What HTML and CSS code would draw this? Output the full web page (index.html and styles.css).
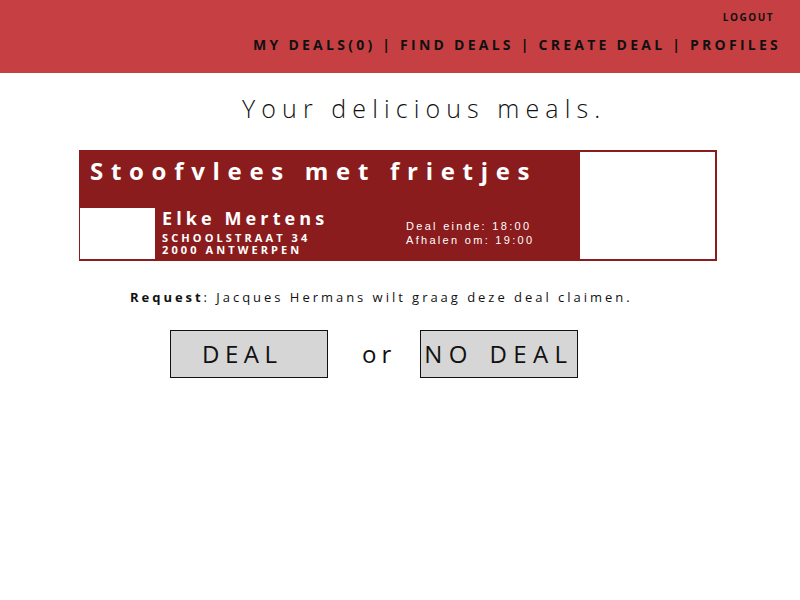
FILE: index.html
```html
<!DOCTYPE html>
<html>
<head>
<meta charset="utf-8">
<link rel="stylesheet" href="styles.css">
</head>
<body>
<header class="topbar">
  <div class="logout">LOGOUT</div>
  <nav class="nav">MY DEALS(0) | FIND DEALS | CREATE DEAL | PROFILES</nav>
</header>
<main class="content">
  <h1 class="title">Your delicious meals.</h1>
  <div class="card">
    <div class="card-main">
      <div class="card-title">Stoofvlees met frietjes</div>
      <div class="card-bottom">
        <div class="avatar"></div>
        <div class="person">
          <div class="name">Elke Mertens</div>
          <div class="addr first">SCHOOLSTRAAT 34</div>
          <div class="addr">2000 ANTWERPEN</div>
        </div>
        <div class="times">
          <div>Deal einde: 18:00</div>
          <div>Afhalen om: 19:00</div>
        </div>
      </div>
    </div>
    <div class="card-side"></div>
  </div>
  <p class="request"><b>Request</b>: Jacques Hermans wilt graag deze deal claimen.</p>
  <div class="actions">
    <button class="btn btn-deal">DEAL</button>
    <span class="or">or</span>
    <button class="btn btn-nodeal">NO DEAL</button>
  </div>
</main>
</body>
</html>
```
FILE: styles.css
```css
html, body { margin: 0; padding: 0; background: #fff; }
body { font-family: "Open Sans", "Noto Sans", sans-serif; color: #111; }

.topbar {
  background: #c64043;
  height: 73px;
  box-sizing: border-box;
  padding: 11px 20px 0 0;
  display: flex;
  flex-direction: column;
  align-items: flex-end;
  font-family: "Open Sans", "Liberation Sans", sans-serif;
  font-weight: 700;
  color: #111;
}
.logout {
  font-size: 10px;
  letter-spacing: 1.5px;
  line-height: 12px;
  margin-right: 6px;
}
.nav {
  margin-top: 14px;
  font-size: 14px;
  letter-spacing: 3.25px;
  line-height: 16px;
  margin-right: -1px;
}

.content { display: flex; flex-direction: column; align-items: flex-start; }

.title {
  margin: 16px 0 0 242px;
  font-weight: 300;
  font-size: 25px;
  letter-spacing: 6.1px;
  line-height: 38px;
  color: #111;
}

.card {
  margin: 23px 0 0 79px;
  width: 638px;
  height: 111px;
  box-sizing: border-box;
  border: 2px solid #8b1c1d;
  border-left-width: 1px;
  display: flex;
}
.card-main {
  width: 500px;
  background: #8b1c1d;
  color: #fff;
  display: flex;
  flex-direction: column;
  font-family: "Open Sans", "Liberation Sans", sans-serif;
  font-weight: 700;
}
.card-side { flex: 1; background: #fff; }
.card-title {
  font-size: 24px;
  letter-spacing: 7.7px;
  line-height: 36px;
  padding: 1px 0 0 10px;
  height: 56px;
  box-sizing: border-box;
  white-space: nowrap;
}
.card-bottom { display: flex; flex: 1; }
.avatar { width: 75px; height: 51px; background: #fff; margin-left: 0; }
.person { margin-left: 7px; width: 244px; }
.name {
  font-size: 18px;
  letter-spacing: 4.1px;
  line-height: 20px;
  margin-top: 0;
  white-space: nowrap;
}
.addr {
  font-size: 11px;
  letter-spacing: 3.1px;
  line-height: 12px;
  white-space: nowrap;
}
.addr.first { margin-top: 4px; }
.times {
  font-family: "Liberation Sans", Arial, sans-serif;
  font-weight: 400;
  font-size: 11px;
  letter-spacing: 2.3px;
  line-height: 14px;
  margin-top: 11px;
  white-space: nowrap;
}

.request {
  margin: 27px 0 0 130px;
  font-size: 13px;
  letter-spacing: 2.97px;
  line-height: 18px;
  white-space: nowrap;
}
.request b { font-weight: 700; }

.actions {
  margin: 24px 0 0 170px;
  display: flex;
  align-items: center;
}
.btn {
  width: 158px;
  height: 48px;
  background: #d6d6d6;
  border: 1px solid #111;
  border-radius: 0;
  font-family: "Open Sans", "Noto Sans", sans-serif;
  font-weight: 400;
  font-size: 24px;
  letter-spacing: 5.5px;
  color: #111;
  padding: 0;
  line-height: 46px;
  white-space: nowrap;
  text-align: left;
}
.btn-deal { padding-left: 31px; }
.btn-nodeal { padding-left: 3px; word-spacing: 3px; letter-spacing: 6.4px; }
.or {
  font-size: 24px;
  letter-spacing: 5px;
  margin: 0 24px 0 34px;
  line-height: 32px;
}
```
